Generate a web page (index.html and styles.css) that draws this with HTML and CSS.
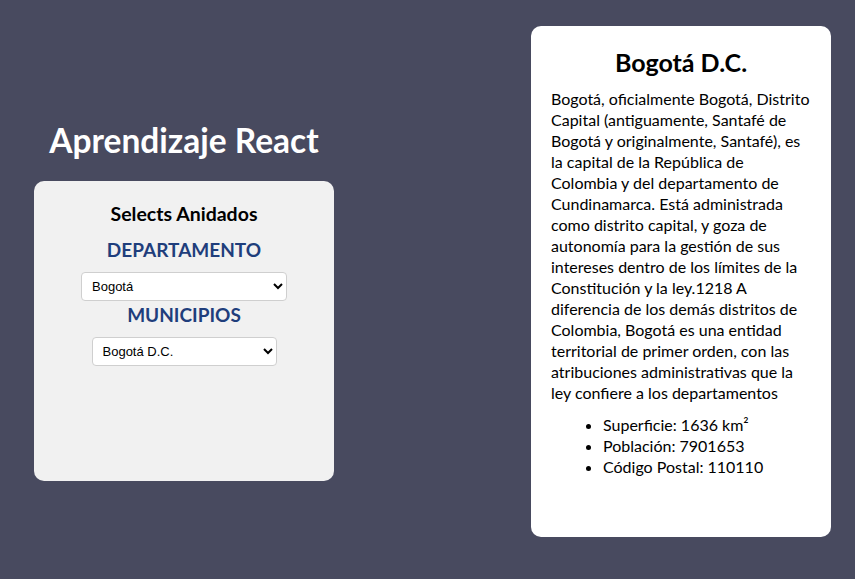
FILE: index.html
```html
<!DOCTYPE html>
<html lang="es">
<head>
<meta charset="utf-8">
<title>Aprendizaje React</title>
<link rel="stylesheet" href="styles.css">
</head>
<body>
<div class="app">
  <div class="left">
    <h1 class="title">Aprendizaje React</h1>
    <div class="card-selects">
      <h3 class="subtitle">Selects Anidados</h3>
      <h2 class="label">DEPARTAMENTO</h2>
      <select class="sel sel-dep">
        <option>Bogotá</option>
      </select>
      <h2 class="label label-mun">MUNICIPIOS</h2>
      <select class="sel sel-mun">
        <option>Bogotá D.C.</option>
      </select>
    </div>
  </div>
  <div class="info">
    <h2 class="info-title">Bogotá D.C.</h2>
    <p class="info-text">Bogotá, oficialmente Bogotá, Distrito Capital (antiguamente, Santafé de Bogotá y originalmente, Santafé), es la capital de la República de Colombia y del departamento de Cundinamarca. Está administrada como distrito capital, y goza de autonomía para la gestión de sus intereses dentro de los límites de la Constitución y la ley.1218 A diferencia de los demás distritos de Colombia, Bogotá es una entidad territorial de primer orden, con las atribuciones administrativas que la ley confiere a los departamentos</p>
    <ul class="info-list">
      <li>Superficie: 1636 km²</li>
      <li>Población: 7901653</li>
      <li>Código Postal: 110110</li>
    </ul>
  </div>
</div>
</body>
</html>
```
FILE: styles.css
```css
html, body {
  margin: 0;
  padding: 0;
  background: #484a5f;
  font-family: "Lato", "Open Sans", sans-serif;
}
.app {
  display: flex;
  align-items: flex-start;
  padding: 26px 24px 0 34px;
  gap: 197px;
}
.left {
  width: 300px;
  display: flex;
  flex-direction: column;
  align-items: center;
  padding-top: 92px;
}
.title {
  margin: 0 0 18px;
  color: #fff;
  font-size: 33.5px;
  font-weight: 700;
  line-height: 45px;
}
.card-selects {
  width: 300px;
  height: 300px;
  box-sizing: border-box;
  background: #f1f1f1;
  border-radius: 10px;
  display: flex;
  flex-direction: column;
  align-items: center;
  padding-top: 21px;
}
.subtitle {
  margin: 0 0 12px;
  font-size: 19.5px;
  font-weight: 700;
  line-height: 24px;
  color: #000;
}
.label {
  margin: 0 0 10px;
  font-size: 19px;
  font-weight: 700;
  line-height: 24px;
  color: #1f3e7c;
}
.label-mun {
  margin-top: 2px;
  margin-bottom: 10px;
}
.sel {
  height: 29px;
  box-sizing: border-box;
  background: #fff;
  border: 1px solid #cfcfcf;
  border-radius: 4px;
  font-family: "Liberation Sans", Arial, sans-serif;
  font-size: 13px;
  color: #000;
  padding: 0 4px 0 6px;
}
.sel-dep { width: 206px; }
.sel-mun { width: 185px; }
.info {
  width: 300px;
  height: 511px;
  box-sizing: border-box;
  background: #fff;
  border-radius: 10px;
  padding: 20px 20px;
  color: #000;
}
.info-title {
  margin: 0 0 10px;
  text-align: center;
  font-size: 25px;
  font-weight: 700;
  line-height: 32px;
}
.info-text {
  margin: 0;
  font-size: 16px;
  line-height: 21px;
}
.info-list {
  margin: 11px 0 0;
  padding-left: 52px;
  font-size: 16px;
  line-height: 21px;
}
```
